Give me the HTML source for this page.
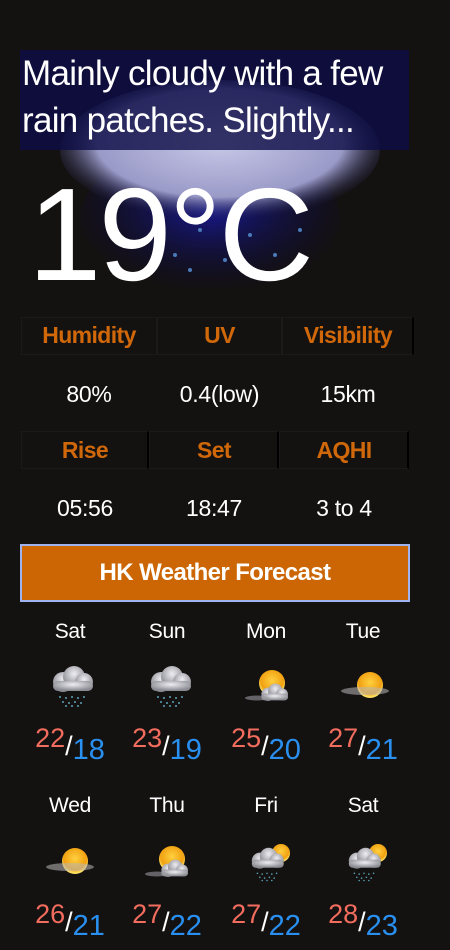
<!DOCTYPE html>
<html><head><meta charset="utf-8"><style>
*{margin:0;padding:0;box-sizing:border-box}
body{width:450px;height:950px;background:#141111;overflow:hidden;position:relative;font-family:"Liberation Sans",sans-serif;color:#fff}
.a{position:absolute}
.desc{left:20px;top:50px;width:389px;height:100px;background:rgba(12,12,70,0.8);font-size:35px;line-height:47px;padding-left:2px;letter-spacing:-0.7px;white-space:nowrap}
.temp{left:28px;top:165px;font-size:132px;line-height:140px;letter-spacing:-3px;}
.h{color:#d0680a;font-weight:bold;font-size:23px;text-align:center;letter-spacing:-0.6px}
.v{font-size:23px;text-align:center;letter-spacing:-0.3px}
.btn{left:20px;top:544px;width:390px;height:58px;background:#cc6604;border:2px solid #9fb3ee;font-weight:bold;font-size:24px;text-align:center;line-height:54px;letter-spacing:-0.6px}
.day{font-size:21px;text-align:center;width:98px;letter-spacing:-0.3px}
.t{width:98px;text-align:center;white-space:nowrap}
.hi{color:#f26d5e;font-size:27px;position:relative;top:-8px}
.sl{font-size:27px;color:#fff}
.lo{color:#2990f0;font-size:29px;position:relative;top:4px}
.grid{position:absolute;border:1px solid #1b1919}
</style></head><body>
<svg class="a" style="left:50px;top:70px" width="330" height="220" viewBox="0 0 330 220">
<defs><radialGradient id="cl" cx="50%" cy="45%" r="55%"><stop offset="0" stop-color="#c8c8e8"/><stop offset="0.7" stop-color="#9a9ac8"/><stop offset="1" stop-color="#20204a" stop-opacity="0"/></radialGradient>
<radialGradient id="bl" cx="50%" cy="40%" r="55%"><stop offset="0" stop-color="#1a1a9a"/><stop offset="1" stop-color="#0a0a40" stop-opacity="0"/></radialGradient></defs>
<ellipse cx="160" cy="150" rx="130" ry="80" fill="url(#bl)"/>
<ellipse cx="170" cy="80" rx="160" ry="70" fill="url(#cl)"/>
<g fill="#4a7ab8"><circle cx="100" cy="165" r="2"/><circle cx="125" cy="185" r="2"/><circle cx="150" cy="160" r="2"/><circle cx="175" cy="190" r="2"/><circle cx="200" cy="165" r="2"/><circle cx="225" cy="185" r="2"/><circle cx="250" cy="160" r="2"/><circle cx="140" cy="200" r="2"/><circle cx="210" cy="205" r="2"/></g>
</svg>
<div class="a desc">Mainly cloudy with a few<br>rain patches. Slightly...</div>
<div class="a temp">19°C</div>
<div class="grid" style="left:21px;top:317px;width:136px;height:38px"></div><div class="grid" style="left:157px;top:317px;width:125px;height:38px"></div><div class="grid" style="left:282px;top:317px;width:132px;height:38px;border-right:2px solid #000"></div>
<div class="grid" style="left:21px;top:431px;width:128px;height:38px;border-right:2px solid #000"></div><div class="grid" style="left:149px;top:431px;width:130px;height:38px;border-right:2px solid #000"></div><div class="grid" style="left:279px;top:431px;width:130px;height:38px;border-right:2px solid #000"></div>
<div class="a h" style="left:21px;top:322px;width:136px">Humidity</div>
<div class="a h" style="left:157px;top:322px;width:125px">UV</div>
<div class="a h" style="left:282px;top:322px;width:132px">Visibility</div>
<div class="a v" style="left:21px;top:381px;width:136px">80%</div>
<div class="a v" style="left:157px;top:381px;width:125px">0.4(low)</div>
<div class="a v" style="left:282px;top:381px;width:132px">15km</div>
<div class="a h" style="left:21px;top:437px;width:128px">Rise</div>
<div class="a h" style="left:149px;top:437px;width:130px">Set</div>
<div class="a h" style="left:279px;top:437px;width:130px">AQHI</div>
<div class="a v" style="left:21px;top:495px;width:128px">05:56</div>
<div class="a v" style="left:149px;top:495px;width:130px">18:47</div>
<div class="a v" style="left:279px;top:495px;width:130px">3 to 4</div>
<div class="a btn">HK Weather Forecast</div>

<svg width="0" height="0" style="position:absolute"><defs>
<radialGradient id="sun" cx="50%" cy="40%" r="55%"><stop offset="0" stop-color="#ffd040"/><stop offset="0.8" stop-color="#f0a010"/><stop offset="1" stop-color="#ffe060"/></radialGradient>
<radialGradient id="cg" cx="50%" cy="35%" r="60%"><stop offset="0" stop-color="#eeeef2"/><stop offset="1" stop-color="#8a8a92"/></radialGradient>
<symbol id="cloud" viewBox="0 0 50 30"><g fill="url(#cg)"><circle cx="16" cy="17" r="10"/><circle cx="27" cy="12" r="11"/><circle cx="37" cy="17" r="9"/><rect x="6" y="16" width="40" height="10" rx="5"/></g></symbol>
<symbol id="drops" viewBox="0 0 30 12"><g fill="#5aa0b8"><circle cx="3" cy="2" r="1"/><circle cx="9" cy="3" r="1"/><circle cx="15" cy="2" r="1"/><circle cx="21" cy="3" r="1"/><circle cx="27" cy="2" r="1"/><circle cx="6" cy="7" r="1"/><circle cx="12" cy="8" r="1"/><circle cx="18" cy="7" r="1"/><circle cx="24" cy="8" r="1"/><circle cx="9" cy="11" r="1"/><circle cx="15" cy="11" r="1"/><circle cx="21" cy="11" r="1"/></g></symbol>
<symbol id="rain" viewBox="0 0 50 44"><use href="#cloud" x="0" y="0" width="50" height="30"/><use href="#drops" x="10" y="30" width="30" height="12"/></symbol>
<symbol id="sc" viewBox="0 0 50 44"><circle cx="27" cy="18" r="13" fill="url(#sun)"/><use href="#cloud" x="12" y="18" width="34" height="20"/><ellipse cx="12" cy="33" rx="12" ry="2.5" fill="#9a9aa0" opacity="0.6"/></symbol>
<symbol id="sh" viewBox="0 0 50 44"><circle cx="30" cy="20" r="13" fill="url(#sun)"/><ellipse cx="25" cy="26" rx="24" ry="4" fill="#b8b8b8" opacity="0.55"/></symbol>
<symbol id="scr" viewBox="0 0 50 44"><circle cx="36" cy="12" r="9" fill="url(#sun)"/><use href="#cloud" x="2" y="6" width="40" height="24"/><use href="#drops" x="10" y="30" width="24" height="11"/></symbol>
</defs></svg>

<div class="a day" style="left:21px;top:620px">Sat</div>
<div class="a day" style="left:118px;top:620px">Sun</div>
<div class="a day" style="left:217px;top:620px">Mon</div>
<div class="a day" style="left:314px;top:620px">Tue</div>
<svg class="a" style="left:47px;top:665px" width="50" height="44"><use href="#rain"/></svg>
<svg class="a" style="left:145px;top:665px" width="50" height="44"><use href="#rain"/></svg>
<svg class="a" style="left:245px;top:665px" width="50" height="44"><use href="#sc"/></svg>
<svg class="a" style="left:340px;top:665px" width="50" height="44"><use href="#sh"/></svg>
<div class="a t" style="left:21px;top:730px"><span class="hi">22</span><span class="sl">/</span><span class="lo">18</span></div>
<div class="a t" style="left:118px;top:730px"><span class="hi">23</span><span class="sl">/</span><span class="lo">19</span></div>
<div class="a t" style="left:217px;top:730px"><span class="hi">25</span><span class="sl">/</span><span class="lo">20</span></div>
<div class="a t" style="left:314px;top:730px"><span class="hi">27</span><span class="sl">/</span><span class="lo">21</span></div>

<div class="a day" style="left:21px;top:794px">Wed</div>
<div class="a day" style="left:118px;top:794px">Thu</div>
<div class="a day" style="left:217px;top:794px">Fri</div>
<div class="a day" style="left:314px;top:794px">Sat</div>
<svg class="a" style="left:45px;top:841px" width="50" height="44"><use href="#sh"/></svg>
<svg class="a" style="left:145px;top:841px" width="50" height="44"><use href="#sc"/></svg>
<svg class="a" style="left:245px;top:841px" width="50" height="44"><use href="#scr"/></svg>
<svg class="a" style="left:342px;top:841px" width="50" height="44"><use href="#scr"/></svg>
<div class="a t" style="left:21px;top:906px"><span class="hi">26</span><span class="sl">/</span><span class="lo">21</span></div>
<div class="a t" style="left:118px;top:906px"><span class="hi">27</span><span class="sl">/</span><span class="lo">22</span></div>
<div class="a t" style="left:217px;top:906px"><span class="hi">27</span><span class="sl">/</span><span class="lo">22</span></div>
<div class="a t" style="left:314px;top:906px"><span class="hi">28</span><span class="sl">/</span><span class="lo">23</span></div>
</body></html>
